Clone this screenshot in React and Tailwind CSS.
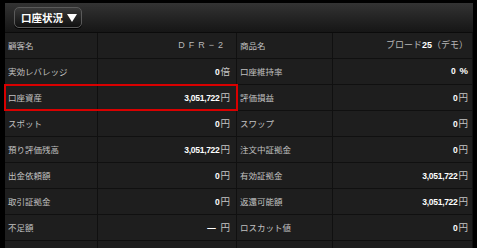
const rows = [
  [{ label: '顧客名', value: 'dfr' }, { label: '商品名', value: 'product' }],
  [{ label: '実効レバレッジ', num: '0', unit: '倍' }, { label: '口座維持率', num: '0', unit: '%' }],
  [{ label: '口座資産', num: '3,051,722', unit: '円', hl: true }, { label: '評価損益', num: '0', unit: '円' }],
  [{ label: 'スポット', num: '0', unit: '円' }, { label: 'スワップ', num: '0', unit: '円' }],
  [{ label: '預り評価残高', num: '3,051,722', unit: '円' }, { label: '注文中証拠金', num: '0', unit: '円' }],
  [{ label: '出金依頼額', num: '0', unit: '円' }, { label: '有効証拠金', num: '3,051,722', unit: '円' }],
  [{ label: '取引証拠金', num: '0', unit: '円' }, { label: '返還可能額', num: '3,051,722', unit: '円' }],
  [{ label: '不足額', num: '—', unit: '円', dash: true }, { label: 'ロスカット値', num: '0', unit: '円' }],
  [{ label: '', num: '', unit: '' }, { label: '', num: '', unit: '' }],
];

const jp = { fontFamily: '"Noto Sans CJK JP", "Noto Sans", sans-serif' };
const num = { fontFamily: '"Liberation Sans", Arial, sans-serif' };

function Value({ c }) {
  if (c.value === 'dfr') {
    return <span className="text-[9px] tracking-[4px] text-[#b8b8b8] mr-[3px]" style={num}>DFR−2</span>;
  }
  if (c.value === 'product') {
    return (
      <span className="text-[9px] text-[#b8b8b8]" style={jp}>
        ブロード<b className="text-white" style={num}>25</b>（デモ）
      </span>
    );
  }
  return (
    <span className="flex items-baseline gap-[1px]">
      <b className={`text-white text-[8.5px] tracking-[-0.3px] ${c.dash ? 'mr-[4px]' : ''} ${c.unit === '%' ? 'mr-[3px]' : ''}`} style={num}>{c.num}</b>
      <span className={`text-[9.5px] ${c.unit === '%' ? 'text-white font-bold' : 'text-[#c4c4c4]'}`} style={c.unit === '%' ? num : jp}>{c.unit}</span>
    </span>
  );
}

function Half({ c, lw, vw, pr }) {
  return (
    <div className={`flex h-full ${c.hl ? 'outline-2 outline-[#d90000] -outline-offset-1' : ''}`}>
      <div className={`${lw} h-full flex items-center pl-[3px] border-r border-[#101010] text-[8.5px] text-[#c0c0c0]`} style={jp}>
        {c.label}
      </div>
      <div className={`${vw} h-full flex items-center justify-end ${pr} border-r border-[#101010]`}>
        <Value c={c} />
      </div>
    </div>
  );
}

export default function App() {
  return (
    <div className="w-[477px] h-[248px] bg-black pl-[5px] pt-[3px] pr-[4px] overflow-hidden">
      <div className="h-[30px] bg-gradient-to-b from-[#333] to-[#161616] border-b border-[#0b0b0b] flex items-center pl-[9px]">
        <div className="h-[21px] w-[68px] pl-[6px] flex items-center gap-[4px] rounded-[5px] border border-[#5a5a5a] bg-gradient-to-b from-[#3a3a3a] to-[#111] shadow-[0_1px_0_#000]">
          <span className="text-white font-bold text-[10.5px]" style={jp}>口座状況</span>
          <svg width="10" height="8" viewBox="0 0 10 8">
            <path d="M0 0H10L5 8Z" fill="#fff" />
          </svg>
        </div>
      </div>
      <div className="bg-[#1e1e1e]">
        {rows.map((r, i) => (
          <div key={i} className="flex h-[26px] border-b border-[#101010]">
            <div className="w-[232px] shrink-0">
              <Half c={r[0]} lw="w-[93px]" vw="w-[139px]" pr="pr-[6px]" />
            </div>
            <div className="w-[236px] shrink-0">
              <Half c={r[1]} lw="w-[96px]" vw="w-[140px]" pr="pr-[4px]" />
            </div>
          </div>
        ))}
      </div>
    </div>
  );
}
